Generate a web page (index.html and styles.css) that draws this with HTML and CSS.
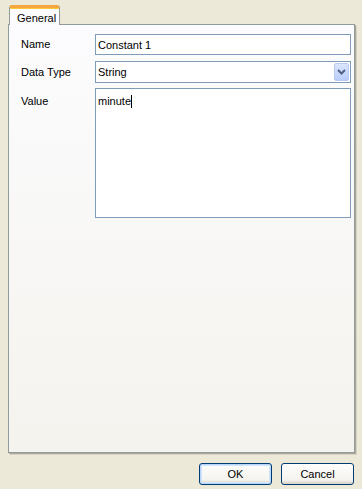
FILE: index.html
```html
<!DOCTYPE html>
<html lang="en">

<head>
  <meta charset="UTF-8" />
  <title>Constant properties</title>
  <link rel="stylesheet" href="styles.css">
</head>

<body>
  <div class="dialog">
    <div class="tabs">
      <div class="tab active">General</div>
    </div>

    <div class="panel">
      <div class="form">
        <div class="label">Name</div>
        <div class="field">Constant 1</div>

        <div class="label">Data Type</div>
        <div class="field select">
          <span>String</span>
          <span class="drop">
            <svg width="9" height="6" viewBox="0 0 9 6">
              <path d="M1 1 L4.5 4.5 L8 1" fill="none" stroke="#4d6185" stroke-width="2" />
            </svg>
          </span>
        </div>

        <div class="label label-top">Value</div>
        <div class="field area">minute<span class="caret"></span></div>
      </div>
    </div>

    <div class="footer">
      <button class="btn default">OK</button>
      <button class="btn">Cancel</button>
    </div>
  </div>
</body>

</html>
```

FILE: styles.css
```css
body {
  margin: 0;
  background: #ece9d8;
  font-family: 'Liberation Sans', Arial, sans-serif;
  font-size: 11px;
  color: #000;
}

.dialog {
  height: 489px;
  display: flex;
  flex-direction: column;
  padding: 0 7px 0 8px;
  box-sizing: border-box;
}

.tabs {
  display: flex;
  padding-top: 5px;
  margin-bottom: -1px;
  position: relative;
  z-index: 1;
}

.tab {
  width: 51px;
  height: 20px;
  box-sizing: border-box;
  margin-left: 1px;
  padding: 4px 0 0 7px;
  background: #fcfcfe;
  border: 1px solid #919b9c;
  border-bottom: none;
  border-top: 3px solid #f5a73d;
  border-radius: 3px 3px 0 0;
  box-shadow: inset 0 1px 0 #ffc83c;
  line-height: 12px;
}

.panel {
  flex: 1;
  border: 1px solid #919b9c;
  background: linear-gradient(#fcfcfe, #f4f3ee);
  box-shadow: 1px 1px 0 #aca899, 2px 2px 0 #d6d3c4;
  padding: 9px 3px 0 12px;
  margin-bottom: 2px;
}

.form {
  display: grid;
  grid-template-columns: 74px 1fr;
  row-gap: 6px;
  align-items: center;
}

.label {
  line-height: 13px;
}

.label-top {
  align-self: start;
  padding-top: 6px;
}

.field {
  height: 21px;
  box-sizing: border-box;
  border: 1px solid #7f9db9;
  background: #fff;
  padding: 0 2px;
  display: flex;
  align-items: center;
}

.select {
  height: 22px;
  justify-content: space-between;
  padding-right: 1px;
}

.drop {
  width: 15px;
  height: 18px;
  box-sizing: border-box;
  border-radius: 2px;
  border: 1px solid #bac9ef;
  background: linear-gradient(#dbe6fd, #b9cdfb);
  display: flex;
  align-items: center;
  justify-content: center;
}

.area {
  height: 130px;
  align-items: flex-start;
  padding-top: 6px;
  line-height: 13px;
  margin-top: -1px;
}

.caret {
  display: inline-block;
  width: 1px;
  height: 13px;
  background: #000;
}

.footer {
  height: 34px;
  display: flex;
  justify-content: flex-end;
  align-items: flex-start;
  gap: 9px;
  padding: 8px 1px 0 0;
  box-sizing: border-box;
}

.btn {
  width: 73px;
  height: 22px;
  font-family: 'Liberation Sans', Arial, sans-serif;
  font-size: 11px;
  color: #000;
  border: 1px solid #003c74;
  border-radius: 3px;
  background: linear-gradient(#fefefd, #f4f3ee 80%, #d6d0c5);
  padding: 0;
}

.default {
  box-shadow: inset 0 0 0 1px #bcd4f6, inset 0 0 0 2px #cee7ff;
}
```
